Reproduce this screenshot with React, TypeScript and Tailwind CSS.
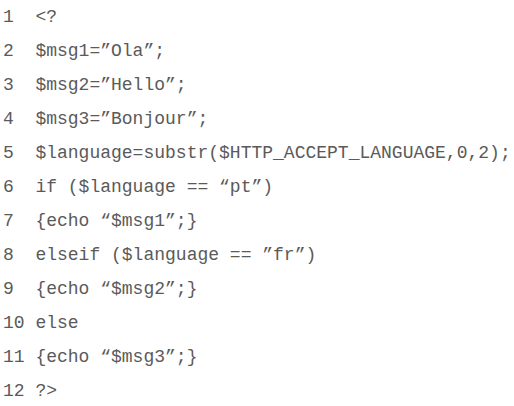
export default function App() {
  const lines = [
    "1  <?",
    "2  $msg1=”Ola”;",
    "3  $msg2=”Hello”;",
    "4  $msg3=”Bonjour”;",
    "5  $language=substr($HTTP_ACCEPT_LANGUAGE,0,2);",
    "6  if ($language == “pt”)",
    "7  {echo “$msg1”;}",
    "8  elseif ($language == ”fr”)",
    "9  {echo “$msg2”;}",
    "10 else",
    "11 {echo “$msg3”;}",
    "12 ?>",
  ];
  return (
    <div className="w-[514px] h-[406px] bg-white overflow-hidden pl-[3px] pt-0">
      {lines.map((l, i) => (
        <div
          key={i}
          className="whitespace-pre text-[18px] leading-[34px] text-[#5a5a5a]"
          style={{ fontFamily: '"Liberation Mono", "Courier New", monospace' }}
        >
          {l}
        </div>
      ))}
    </div>
  );
}
